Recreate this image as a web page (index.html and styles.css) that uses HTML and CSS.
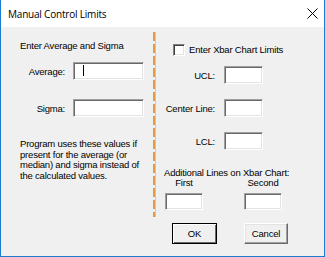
FILE: index.html
```html
<!DOCTYPE html>
<html lang="en">
<head>
  <meta charset="UTF-8" />
  <title>Manual Control Limits</title>
  <link rel="stylesheet" href="styles.css">
</head>
<body>
  <div class="window">
    <div class="titlebar">
      <span class="title">Manual Control Limits</span>
      <svg class="close" width="11" height="11" viewBox="0 0 11 11">
        <path d="M0.5 0.5 L10.5 10.5 M10.5 0.5 L0.5 10.5" stroke="#000" stroke-width="1" fill="none" />
      </svg>
    </div>

    <div class="content">
      <div class="left">
        <div class="heading">Enter Average and Sigma</div>
        <div class="field">
          <label>Average:</label>
          <div class="textbox wide"><span class="caret"></span></div>
        </div>
        <div class="field second">
          <label>Sigma:</label>
          <div class="textbox wide"></div>
        </div>
        <p class="note">Program uses these values if present for the average (or median) and sigma instead of the calculated values.</p>
      </div>

      <div class="divider"></div>

      <div class="right">
        <div class="check-row">
          <span class="checkbox"></span>
          <span>Enter Xbar Chart Limits</span>
        </div>

        <div class="limits">
          <label>UCL:</label>
          <div class="textbox"></div>
          <label>Center Line:</label>
          <div class="textbox"></div>
          <label>LCL:</label>
          <div class="textbox"></div>
        </div>

        <div class="extra-title">Additional Lines on Xbar Chart:</div>
        <div class="extra">
          <div class="extra-col">
            <span>First</span>
            <div class="textbox small"></div>
          </div>
          <div class="extra-col">
            <span>Second</span>
            <div class="textbox small"></div>
          </div>
        </div>

        <div class="buttons">
          <button class="btn default">OK</button>
          <button class="btn">Cancel</button>
        </div>
      </div>
    </div>
  </div>
</body>
</html>
```

FILE: styles.css
```css
* {
  box-sizing: border-box;
  margin: 0;
  padding: 0;
}

body {
  width: 325px;
  height: 257px;
  overflow: hidden;
  font-family: 'Liberation Sans', Arial, sans-serif;
  font-size: 9.5px;
  letter-spacing: -0.2px;
  color: #000;
}

.window {
  width: 325px;
  height: 257px;
  background-color: #f0f0f0;
  border: 1px solid #1a7bd0;
  border-top: none;
  display: flex;
  flex-direction: column;
}

.titlebar {
  height: 27px;
  background-color: #fff;
  display: flex;
  align-items: center;
  justify-content: space-between;
  padding: 0 6px 0 7px;
}

.title {
  font-family: 'Open Sans', sans-serif;
  font-size: 10px;
  letter-spacing: -0.2px;
  line-height: 14px;
}

.close {
  display: block;
}

.content {
  flex: 1;
  display: flex;
}

.left {
  width: 152px;
  padding: 13px 0 0 19px;
}

.heading {
  line-height: 11px;
}

.field {
  display: flex;
  align-items: center;
  gap: 8px;
  margin-top: 11px;
}

.field.second {
  margin-top: 19px;
}

.field label {
  width: 45px;
  text-align: right;
}

.textbox {
  width: 39px;
  height: 18px;
  background-color: #fff;
  border: 1px solid;
  border-color: #a0a0a0 #fff #fff #a0a0a0;
  box-shadow: inset 1px 1px 0 #696969, inset -1px -1px 0 #e3e3e3;
  position: relative;
}

.textbox.wide {
  width: 71px;
}

.textbox.small {
  width: 38px;
  height: 17px;
}

.caret {
  position: absolute;
  left: 9px;
  top: 2px;
  width: 1px;
  height: 11px;
  background-color: #000;
}

.note {
  margin-top: 22px;
  line-height: 10.5px;
  width: 125px;
}

.divider {
  width: 2px;
  height: 185px;
  margin-top: 5px;
  background: repeating-linear-gradient(to bottom, #e49a45 0 9px, transparent 9px 12px);
  box-shadow: 1px 0 0 #a9d0f2;
}

.right {
  flex: 1;
  padding-top: 16px;
}

.check-row {
  display: flex;
  align-items: center;
  gap: 4px;
  padding-left: 18px;
  height: 13px;
}

.checkbox {
  width: 12px;
  height: 12px;
  background-color: #fff;
  border: 1px solid;
  border-color: #808080 #fff #fff #808080;
  box-shadow: inset 1px 1px 0 #404040, inset -1px -1px 0 #e3e3e3;
}

.limits {
  display: grid;
  grid-template-columns: 60px 39px;
  grid-auto-rows: 18px;
  column-gap: 9px;
  row-gap: 15px;
  align-items: center;
  margin-top: 10px;
}

.limits label {
  text-align: right;
}

.extra-title {
  margin-top: 18px;
  padding-left: 9px;
  line-height: 10px;
}

.extra {
  display: flex;
  gap: 41px;
  padding-left: 10px;
}

.extra-col {
  width: 38px;
  display: flex;
  flex-direction: column;
  align-items: center;
  line-height: 10px;
  gap: 5px;
}

.buttons {
  display: flex;
  gap: 27px;
  margin-top: 13px;
  padding-left: 17px;
}

.btn {
  width: 44px;
  height: 21px;
  font-family: 'Liberation Sans', Arial, sans-serif;
  font-size: 9.5px;
  letter-spacing: -0.2px;
  color: #000;
  background-color: #f0f0f0;
  border: 1px solid;
  border-color: #fff #696969 #696969 #fff;
  box-shadow: inset -1px -1px 0 #a0a0a0, inset 1px 1px 0 #e3e3e3;
}

.btn.default {
  width: 45px;
  border-color: #000;
  box-shadow: inset 1px 1px 0 #fff, inset -1px -1px 0 #696969;
}
```
